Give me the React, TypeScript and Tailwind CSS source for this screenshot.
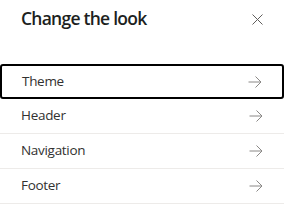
import React from "react";

const items = ["Theme", "Header", "Navigation", "Footer"];

function Arrow() {
  return (
    <svg width="14" height="12" viewBox="0 0 14 12" fill="none" stroke="#8a8886" strokeWidth="1">
      <path d="M0.5 6h12.5M7.5 0.5L13 6l-5.5 5.5" />
    </svg>
  );
}

export default function App() {
  return (
    <div
      className="w-[285px] h-[220px] bg-white text-[#323130]"
      style={{ fontFamily: '"Open Sans", "Segoe UI", sans-serif' }}
    >
      <div className="flex items-center justify-between h-[38px] pl-[21px] pr-[22px]">
        <h1 className="text-[17.5px] font-semibold leading-none tracking-[-0.75px] text-[#201f1e]">Change the look</h1>
        <svg width="11" height="11" viewBox="0 0 11 11" stroke="#605e5c" strokeWidth="1">
          <path d="M0.5 0.5l10 10M10.5 0.5l-10 10" />
        </svg>
      </div>
      <ul className="mt-[26px] w-[284px]">
        {items.map((label, i) => (
          <li
            key={label}
            className={
              i === 0
                ? "flex items-center justify-between h-[35px] pl-[20px] pr-[20px] border-2 border-black rounded-[3px]"
                : "flex items-center justify-between h-[35px] pl-[21px] pr-[21px] border-b border-[#edebe9]"
            }
          >
            <span className="text-[13.5px] leading-none tracking-[-0.3px]">{label}</span>
            <Arrow />
          </li>
        ))}
      </ul>
    </div>
  );
}
